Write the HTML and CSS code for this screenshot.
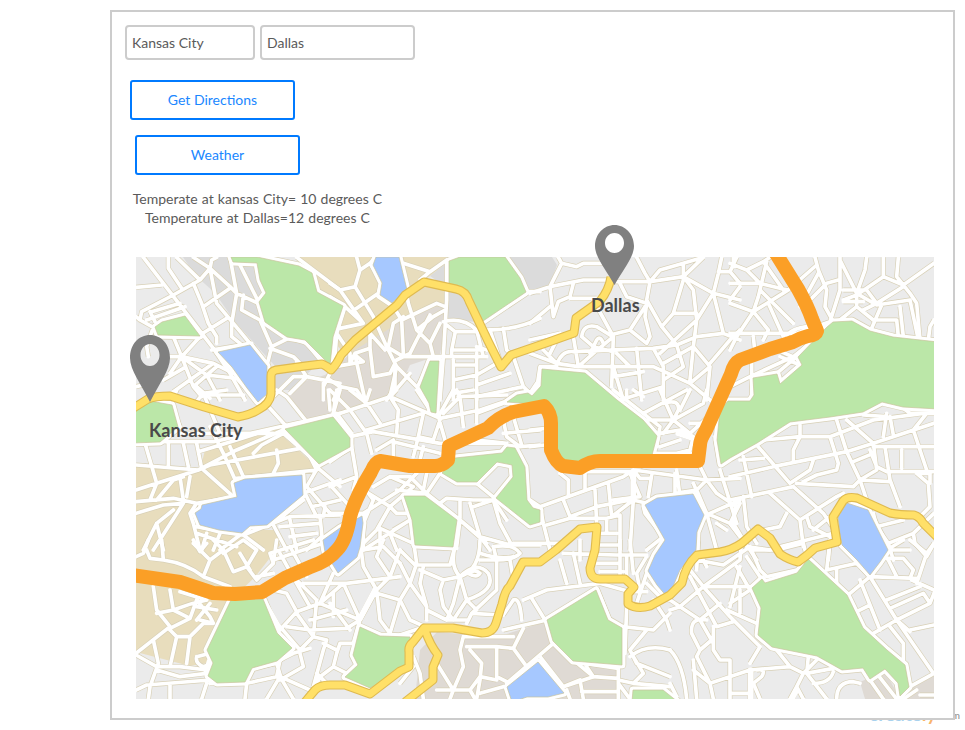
FILE: index.html
```html
<!DOCTYPE html>
<html lang="en">
<head>
<meta charset="utf-8">
<title>Directions and weather</title>
<link rel="stylesheet" href="styles.css">
</head>
<body>
<div class="brand"><span class="brand-blue">create</span><span class="brand-orange">ly</span></div>
<div class="brand-com">.com</div>
<main class="frame">
  <div class="fields">
    <div class="field field-from">Kansas City</div>
    <div class="field field-to">Dallas</div>
  </div>
  <button class="btn btn-directions">Get Directions</button>
  <button class="btn btn-weather">Weather</button>
  <p class="report">Temperate at kansas City= 10 degrees C<br>Temperature at Dallas=12 degrees C</p>
  <section class="map">
    <svg class="map-art" viewBox="136 257 798 442" width="798" height="442">
      <defs>
        <g id="greens">
          <path d="M231 257H257L299 266 312 273 317 292 343 306 333 337 330 365 322 357 305 340 287 337 265 322 259 302 266 293 260 280 257 263 233 262Z"/>
          <path d="M155 327L162 322 185 316 200 336 158 335Z"/>
          <path d="M449 261L460 257H505L520 278 526 292 483 321 467 292 449 287Z"/>
          <path d="M430 361H439L436 413 431 412 429 403 420 387Z"/>
          <path d="M542 369L585 373 617 400 643 420 657 436 652 455 640 465H560L545 405 507 402 517 395 528 393 532 396 541 386Z"/>
          <path d="M753 378L777 374 780 384 802 365 798 357 827 327 833 322 852 321 870 331 893 337 938 342V409L903 407 882 402 863 412 830 417 790 422 757 443 730 458 721 464 717 440 720 410 728 401H750L754 395Z"/>
          <path d="M132 443V407L150 401 172 405 178 427 160 442Z"/>
          <path d="M285 429L333 417 350 438V447L319 464Z"/>
          <path d="M442 473L455 458 502 453 507 447 515 448 525 467 527 500 533 508 540 510V522L530 525 496 498 513 477 512 465 497 462 477 482H457Z"/>
          <path d="M404 496H425L457 520 453 547 415 545 412 520Z"/>
          <path d="M231 600L263 599 277 633 292 648 277 661 252 668 245 682 217 683 208 676 213 663 207 650Z"/>
          <path d="M360 627L380 636 410 637 405 668 370 688 345 677 358 665 353 655Z"/>
          <path d="M547 620L596 590 608 620 622 628V665L573 661 553 641Z"/>
          <path d="M752 588L762 579 765 583 797 573 808 559 847 595 863 628 887 650 905 665 909 687 900 696 898 683 885 669 870 679 863 668 842 670 817 656 772 647 758 635 761 608Z"/>
          <path d="M633 690H663L678 702H632Z"/>
        </g>
        <g id="waters">
          <path d="M218 352L250 345 262 360 267 366V394L258 402 247 388 232 367Z"/>
          <path d="M376 257H399L407 290 392 303 380 295 382 283 373 265Z"/>
          <path d="M202 505L237 497 234 483 245 479 302 475 303 495 267 525 250 526 242 533 219 530 200 525 195 513 201 509Z"/>
          <path d="M323 540L340 528 362 516 363 523 360 547 357 557 338 573 325 552Z"/>
          <path d="M645 505L657 498 693 494 704 515 697 532 696 550 680 570 668 598 657 585 648 571 655 555 665 540Z"/>
          <path d="M838 517L847 503 868 510 877 528 888 550 880 562 870 575 857 560 842 545 840 535Z"/>
          <path d="M507 687L538 662 564 693 548 697H527L512 702Z"/>
        </g>
        <g id="streets">
          <g transform="translate(130 240) scale(.33333)">
            <path d="M40 52L100 130 250 325 300 400 345 480M18 142L95 135M115 52V85L155 145M140 52L205 115M190 52L240 85 300 140 320 160 385 190M130 165L210 120 240 85 245 60 260 52M240 85L260 190 310 250 360 310 415 380M300 52L320 160 305 250V290L330 310M65 215L150 190M50 240L165 200M30 240L35 215 130 165M18 230L30 240 70 262 60 290 50 320 55 350M190 130L215 190 235 250 260 290V310M220 200L300 145M210 285L290 235M245 330L365 310M60 215L75 245M330 75L385 185M340 165L335 210 390 240 425 320 410 380M425 320L475 295M420 325L490 350 510 370M470 290L530 310 575 365M500 52L550 90 630 150M550 100L560 155 630 190"/>
            <path d="M85 290H210M130 290L155 350 190 440 215 470M100 350H155L250 370 330 410M120 400L155 350 210 290M155 350L230 405 320 415 370 470M130 455L250 370M190 440L260 380M18 440L40 435M100 420L160 385M200 440L240 475M230 405L270 480M430 470L490 410 530 410 480 460M500 365L530 410 630 430M580 430V480M610 380L580 440"/>
          </g>
          <g transform="translate(330 240) scale(.33333)">
            <path d="M80 52L90 90 75 140 30 150 0 130M90 90L120 70 135 52M120 70L155 125 145 160 65 215M75 140L130 230 170 320 200 380 270 450M30 150L100 250M0 170L45 200 100 250 30 265M45 200L20 280 15 350M210 52L235 190 260 270 300 310 310 350M220 70L300 95 350 60V180L340 350 330 480M300 95L270 120M350 62L400 52M530 52L590 155H630M460 245L590 160M145 170L190 200 215 240 220 340M215 240L320 190 345 200M175 320L190 250 220 230M20 280L60 340V370L75 340 120 325V280L165 330M15 380L100 365 75 345 105 480M120 325L130 410 180 400 195 370M170 320L220 350H470M195 370V440L170 480M200 360L240 340 260 300 300 225M260 270L310 230 345 210M300 310L330 250M340 245Q400 230 440 270Q550 275 630 235M350 255L375 275H440M375 280L365 330H450M365 330V350M370 360V480M370 375H440M370 420L440 405 500 370M370 460L430 450M440 340V480M440 320L470 330M440 270L460 350M480 270L510 360M520 265L530 330 550 350 580 440M440 435L540 400M440 470L580 440 600 460 620 430"/>
            <path d="M200 380L180 470 240 400M0 420L30 440 80 450 100 480M30 440L10 480M265 435L310 350"/>
          </g>
          <g transform="translate(530 220) scale(.33333)">
            <path d="M85 112L95 130 140 140 160 130H220M95 130L60 200 0 220M60 200L160 180H235M130 190L120 230 85 245 70 290 60 200M60 260L0 310M120 235H200M235 185H360L460 170 550 220 630 240M360 185L350 240 395 320 440 375M360 185L390 150 460 130 520 112M460 130V170M320 112L345 160 360 185M460 170L520 112M460 170L490 210 500 300 490 380 480 480M575 112L565 160 550 220 500 300 390 400M550 220L580 340M565 155H600L620 112M600 155L630 190M460 180L430 280 395 320M430 280H500M270 190L290 230 350 250 345 290 360 350 350 370 300 330 240 345M300 330L345 260M190 240L250 350 245 500M240 345L200 320Q160 310 155 350L190 380 250 395M130 350L145 440M90 340L60 400M0 360L90 340M0 400L80 430 145 440H370L480 490 540 540M130 395L370 385M80 435Q95 390 130 395M180 400L200 360Q210 345 220 370M145 440L190 400 250 350M250 440L280 540M320 385L335 540M370 385L400 440V540M370 385L440 375 500 350 580 340 630 360M250 470L340 455M400 430L490 380 540 440 530 540M540 430L600 360 630 330M440 375L460 440 400 480M480 490L540 440M270 540L400 500M18 520L30 440H80M300 440L260 400M40 390L80 430"/>
          </g>
          <g transform="translate(730 240) scale(.33333)">
            <path d="M0 130L90 130 150 145 175 150M0 70L50 90 90 130M50 90L100 65 120 52M0 180L30 140M100 65L160 150M110 65L85 170 70 215 175 150 260 75M10 52V80M0 190L70 215 115 270 100 300M0 280H200L300 245M20 290L70 215M90 150L190 250M115 190L160 290M0 330L20 290M70 290L75 340M255 52L265 90 290 150 285 200 310 245M210 200L265 100M230 190L290 130 325 120M330 52V150L300 245M330 60L380 160 440 195 540 180 565 300M340 180L380 165 460 110 520 135 612 70M460 52V110M455 195L425 265M410 52L405 90 380 160M505 52L500 110 540 160 560 190 570 300M340 150H410L440 190 520 140M380 165V200L330 240M380 200L430 240H500L505 290M510 200L520 290M612 240L600 260 595 300M400 210L440 190M340 185H400M0 440L60 410 190 350 240 310M65 370V470M150 350L210 375M140 400L200 350M120 320L210 360M170 285Q190 265 230 260"/>
          </g>
          <g transform="translate(130 390) scale(.33333)">
            <path d="M95 40L130 60 150 110M130 30L140 0M195 40L220 10 290 0M220 10L270 130M240 15H340M18 155H250L450 110 630 70M150 130H430M45 160L80 280 60 330M115 160V225M160 160L175 230M200 160L215 235 310 320M18 225L205 240 320 180 460 120M205 240L240 225 540 170M18 300L80 280 205 240M18 335L130 325 200 340 320 320M80 330L130 270 160 260M150 260L160 330M180 260L170 320M205 185L320 150 430 115M240 110L280 190 320 280M300 170L340 260M370 190L395 165 460 130 540 200 560 240 320 265M440 180L445 220 430 250M370 0L470 110 565 230 530 290 600 370M440 0L470 20 530 95M560 230L630 190M565 235L630 290M510 260L520 300 545 350 630 330M520 310L630 270M545 350L560 380 580 380 585 350M430 400L520 330M18 370L100 345 160 340 70 480M200 340L180 370 190 400 210 480M200 410L340 435 480 380 630 375M40 480L80 400 130 360M80 400L100 480M230 430L215 480M270 430L250 480M200 430L320 470M340 435L400 480M330 435L270 480M430 405L470 480M480 390L500 480M450 410L570 400M570 380L580 480M480 440L560 430M530 480L575 440M595 0L600 60M630 0L610 70"/>
          </g>
          <g transform="translate(330 390) scale(.33333)">
            <path d="M0 80L180 20 330 85 450 60 630 0M0 0L60 60 110 130 125 190M20 0L10 70M60 0L110 40 150 100M110 30L120 0M200 0L180 20 205 60 200 130M60 140L130 125 330 160 520 160M65 130L20 70M110 120L280 70 265 140 310 150 330 90M260 0L300 60M345 150L325 80 370 0M390 20L400 110M385 20L530 15M440 0V100M440 70L520 40M340 70L390 20 380 0M140 180L190 150V200M190 155L330 190M250 200L265 140M270 210L280 170M520 90L530 140 570 170 630 165M550 80L575 165M520 130L630 120M440 150L530 160M0 290L80 260M0 285L60 350M0 215L65 170 60 140M65 170L80 260 70 300M0 370H110M100 300L180 350 140 420 100 460M180 350L200 370 240 370M180 350L250 290 180 260 130 290M100 370L210 300 260 250M180 260H240L290 310 330 250M200 300L290 310 390 390 380 470M390 390L450 440 540 465H630M290 250L280 300M240 330L250 460M100 480L240 390M150 420V480M150 415L250 460M190 420L240 390M200 480L180 430M330 340L350 325 430 330 490 330 530 390M390 330V385M420 340L450 440 480 480M430 350L490 330M390 390L470 460M490 330L510 400 545 465M250 465L380 475M495 325L440 280M100 290L130 330 100 400V480"/>
          </g>
          <g transform="translate(530 390) scale(.33333)">
            <path d="M0 120L50 115M0 170L45 165M90 250L115 270V320M165 250V300M30 350L280 260 310 240 530 270 630 265M170 245H310M0 330L30 350 40 400 60 480M50 405L120 385 230 385 270 375V480M120 380L200 350 300 330M100 330L120 380M195 300L200 400M235 280L245 380M300 250L330 320 250 330M245 380L310 330 300 480M310 330L350 340M365 255L355 320M340 350L345 370 400 440 350 480M310 240L330 265 360 265M435 250V310L500 300 530 370M490 280L530 370 600 400 630 340M530 270L560 310 620 350M570 240L620 400M510 230L530 270 500 300M530 370L560 480M540 370L630 330M600 400L630 440M555 140L570 225M250 0L390 110 380 170M290 0V30M390 0L430 90 400 130M340 70L470 0M400 40Q450 25 445 60L430 90 480 130 590 30M480 0L450 60M350 90H430M430 90L520 40 530 0M390 130L450 120 490 140 480 180 440 190M390 170L450 150M370 190H490M540 100H480M600 30H630M210 430H260M210 465H265M230 385V430M440 240L450 320M310 0L340 20M560 400L590 420"/>
            <path class="junction" d="M445 130L490 145M310 250V325"/>
          </g>
          <g transform="translate(730 400) scale(.33333)">
            <path d="M0 230L130 200 350 155 430 130 612 70M40 170L65 290M30 180L100 175M80 135L180 250 240 210 250 180M100 120L210 110H300L430 60 580 40M210 75V110L190 150V185M320 60L350 155 390 240 410 300M300 110L325 190 320 210 260 225 220 245M350 60L430 130 440 210 390 240 370 260 200 250M0 300L190 260M120 280L210 360 320 290 340 280M190 260L280 340 320 400M40 290L50 380 80 430M20 300L10 370 40 420M430 140H612M420 150L440 200 470 215H612M465 140L480 240 510 320M515 150V205M550 90L590 210M470 40L460 110M480 50L490 105M550 90L590 40M400 45L470 50M370 185L430 160M390 240L480 245M560 220L595 250 600 320 570 350M560 220H600V250M100 390L150 380 170 340M210 360L220 440M150 440L310 400M50 440L120 450M230 350L240 380 300 410M250 390L300 350M430 340L440 380 480 370 520 360M440 380L475 430 550 400 612 340M475 430L490 480M550 400L555 430 590 470 612 430M0 370L40 420 80 480M300 420L295 480M335 430L380 480M520 25L540 40H612"/>
          </g>
          <g transform="translate(130 540) scale(.33333)">
            <path d="M50 30L60 55 100 60Q170 70 220 110L300 140M100 60L95 0M18 50L40 40 55 0M190 0L210 35 230 10M190 10L240 60 280 30 250 0M240 60L220 110M280 30L310 95 350 80 380 30 340 0 280 40M350 80L380 120 430 70 420 40 550 0M330 40L360 90M430 70L440 0M450 40L500 130 540 200M480 20L530 110M430 60L490 40 580 10M380 110L430 100M70 140L80 210 120 260 18 340M120 150L130 210 80 220M150 155L230 180M130 210Q180 190 230 180M130 210L180 235 120 265M180 235L200 180 240 230 250 250H220L180 290 170 370M240 190L200 240M120 270L140 290 120 380M140 290H180M200 200L260 210M210 240L250 250M70 300L85 370 60 440 55 477M18 345L80 380 150 380 230 390M200 350L240 340 250 370 220 380Q195 370 200 350M230 390L240 420 50 435 18 450M120 430V477M80 390L150 410 230 400M230 430L215 477M240 430H350L440 410 450 360 490 340M350 430L345 477M345 430L370 385 440 370 455 420M450 410L490 477M450 410L410 477M450 410L540 450M490 340L540 325M510 330L450 260M430 150L470 160 500 215 450 270M500 215L570 190 610 100M500 220L550 290 510 330M470 260L540 270 650 265 690 240M560 180L550 290 590 300 580 330M570 190L690 240 670 310M520 130H650L810 110M500 120L560 180M640 130L690 240 740 150 700 80 690 0M640 130L570 190M610 160V230M540 240L650 210M600 190L660 270M670 310L630 310 620 340 610 380 650 400M580 330L550 440M580 310L620 330M610 380L570 410 540 477M560 400L600 440M740 150L750 240 780 280M740 160L810 180 780 280M740 150L780 110 810 30M760 0L740 50 780 110M700 30L760 20 810 70M510 340L520 380 450 420"/>
            <path class="junction" d="M405 190L445 260M735 150L690 235M238 365L230 395"/>
          </g>
          <g transform="translate(400 540) scale(.33333)">
            <path d="M40 0L50 70 30 130 80 200V240M0 30L45 75H150L170 0M0 70L30 130 0 180 30 240 75 260M70 80L60 130 80 200M60 90L130 120 120 150 130 200 160 240 200 180M130 120L180 110 200 180 230 210M180 110L160 190 140 240M165 20Q150 80 180 110Q240 90 240 0M180 110Q230 60 265 100Q290 150 200 180M205 100Q225 85 240 100Q230 115 205 100M240 60H290L280 20M290 60V150L215 220 200 250M80 210L140 240H200M240 40Q300 60 340 50M280 20Q340 10 360 40Q340 60 290 60M330 60L340 120M340 10H480M215 220L300 225M310 225L340 180Q360 170 365 240M370 180L440 150 600 130 690 155H740M310 270L440 240 590 145M395 175L435 240M460 310L580 410 655 415M590 145L630 240 670 265V350M460 310L320 430M480 60L500 130M520 40L540 130M490 40L650 45H740M540 0V60M590 70H660M600 95H670M660 0V110M690 0L700 100M740 50L710 100 720 150M680 50V110M740 130L780 170M740 100L710 190M680 200L675 340M670 260L760 270 810 220M760 180L800 240 810 270M690 350Q740 310 810 330M740 270L690 330 710 370 810 410M655 350V477M700 350L730 400 700 430 655 420M700 430L810 440M655 430L690 477M0 285L60 265"/>
            <path d="M190 290L180 330 190 380 160 450 110 370M190 290H340M200 320H290L340 325 370 265M290 325V410L330 430M210 330L245 370 240 420 230 477M240 410L290 420M340 325L380 380M110 450H210L240 410M160 450L150 477M210 450L225 477M240 460L310 440M40 350L60 400 70 477M420 350L490 440 580 410M490 440L540 420 550 477M545 455H655M520 365L655 385M550 365L580 410M0 430L40 380M500 450L510 477"/>
          </g>
          <g transform="translate(670 540) scale(.33333)">
            <path d="M85 0L80 90M60 90L100 140 180 230 270 320M100 140L210 60 215 0M100 140H240M0 210L30 200 100 140M0 180L30 200 90 240 130 310M60 110L140 260 190 245M90 240L150 190M110 240Q60 230 65 280L90 330 80 350 120 430 130 477M130 260V330L150 360H180V477M120 430L240 390V477M90 330L125 300M80 60L160 75 240 20M180 200L210 80M210 150V220M170 210L260 250M200 80L240 150M230 50L270 110M240 20L270 90 290 110 380 90M250 30H320L400 10 410 50M180 190L240 150M320 330L360 380 240 390M270 320L240 370M360 380L400 400 380 440 400 477M415 350L410 400 470 477M400 400L440 360M410 400L490 385M430 430Q480 430 490 395M260 390Q290 385 275 410L250 430 270 477M180 460H240M360 477L380 440M500 477Q500 425 550 425L570 430M600 420L640 477M620 400L680 477M470 90L480 0M470 90L560 70M500 85V130M560 70L600 110 680 240 790 400M540 160L600 110 650 30H720M560 215L600 195M570 120L630 270M610 280L680 240 780 190 792 160M600 110L740 115M725 120L792 150M650 55H700L730 90 720 115M650 180L750 140M660 205L760 160 780 190M655 60L680 110M720 0L770 40 740 130M770 40L792 10M650 30L700 0M720 270L792 255M660 260L700 310V360M720 440L792 400M700 477L740 450M750 465H792M0 330Q40 370 50 477M70 360L80 477M70 390L120 430M0 430L20 470M90 40L110 80M680 240L720 275"/>
            <path class="junction" d="M242 390V477M380 450L365 477"/>
          </g>
        </g>
        <g id="avenues">
          <path d="M132 409L148 399Q155 396 170 396L204 407 238 417Q250 415 258 410Q270 404 271 394V376Q271 371 276 370L305 366 322 364Q327 366 331 370Q337 364 341 355L355 340 397 305 405 295 424 282 456 289Q466 291 469 301L488 341 501 367 511 355 546 343 574 333 576 318 600 301Q609 290 611 277"/>
          <path d="M425 630Q430 645 438 655L433 667V680L405 702M305 702L315 690Q320 685 330 685H345L370 694 400 671 409 667V652Q408 646 413 642L424 628H453L482 633Q493 633 496 623L502 604Q505 590 510 586L523 562 540 562 556 550 580 529 597 527 595 550 590 568Q590 579 600 579H625L634 587 628 594V604Q637 610 650 606L670 595 682 583Q685 566 697 555L720 552Q732 550 742 543L758 529 770 538 780 554Q789 560 798 562Q808 555 815 548L837 542 833 517 843 501Q847 496 857 498L890 513Q900 515 914 515Q920 517 923 523L938 538"/>
        </g>
      </defs>
      <rect class="land" x="136" y="257" width="798" height="442"/>
      <g class="urban">
        <path d="M183 257H231L260 262 266 295 268 322 305 340 322 360 290 390H272L275 366 235 322 215 293 195 275Z"/>
        <path d="M449 292L467 294 477 322 446 319ZM430 276L446 263V287Z"/>
        <path d="M507 257H552L557 265 550 285 528 292Z"/>
      </g>
      <g class="sand">
        <path d="M296 257H446V263L425 280 444 290V305L400 320 366 350 345 355 333 340 343 306 317 292 312 273Z"/>
        <path d="M136 466L200 470 205 450 275 429 318 468 300 475 235 500 250 530 275 530 280 545 255 577 231 600 207 650 213 662 190 666 136 652Z"/>
      </g>
      <g class="town">
        <path d="M287 400L293 387 305 381 325 375 355 350 400 322 444 303 446 320 440 355 410 365 395 397 345 412 306 420 297 410Z"/>
        <path d="M437 632L497 637 545 622 556 646 590 662 618 669V699H415L420 650Z"/>
        <path d="M860 682L885 671 900 699H865ZM909 688L934 674V699H902Z"/>
      </g>
      <g class="curb"><use href="#greens" class="rim"/><use href="#waters" class="rim"/><use href="#streets"/></g>
      <g class="asphalt"><use href="#greens" class="rim"/><use href="#waters" class="rim"/><use href="#streets"/></g>
      <use href="#greens" class="green"/>
      <use href="#waters" class="water"/>
      <use href="#avenues" class="avenue-edge"/>
      <use href="#avenues" class="avenue"/>
      <path class="route" d="M775 252L798 289Q808 307 812 319L817 331Q816 335 808 336Q800 338 793 342L770 349 740 360Q734 363 731 374L706 430Q700 440 700 445L698 461H600Q590 461 580 468L563 466Q556 463 551 450V423Q551 413 544 406L513 412Q498 417 488 428L449 446 448 460Q442 466 435 466H410L380 461Q375 462 371 472Q355 498 350 517Q346 541 337 550Q328 561 310 567L285 578 262 592 235 594 213 593 180 582 132 575"/>
    </svg>
    <svg class="pin pin-kansas" viewBox="0 0 40 67" width="40" height="67"><path fill-rule="evenodd" d="M20 0C31 0 40 9 40 23C40 35 29 49 20 67C11 49 0 35 0 23C0 9 9 0 20 0ZM20 9C14.500 9 10.500 14 10.500 20S14.500 31 20 31S29.500 26 29.500 20S25.500 9 20 9Z"/></svg>
    <svg class="pin pin-dallas" viewBox="0 0 39 60" width="39" height="60"><path fill-rule="evenodd" d="M19.500 0C30 0 39 9 39 21C39 32 28 45 19.500 60C11 45 0 32 0 21C0 9 9 0 19.500 0ZM19.500 8C14 8 10 12.500 10 18S14 28 19.500 28S29 23.500 29 18S25 8 19.500 8Z"/></svg>
    <span class="place place-kansas">Kansas City</span>
    <span class="place place-dallas">Dallas</span>
  </section>
</main>
</body>
</html>
```
FILE: styles.css
```css
* { box-sizing: border-box; }
body {
  margin: 0;
  padding-top: 10px;
  height: 730px;
  overflow: hidden;
  position: relative;
  background: #fff;
  color: #5a5a5a;
  font: 14px/19px Lato, sans-serif;
}
.frame {
  position: relative;
  width: 845px;
  height: 710px;
  margin-left: 110px;
  padding: 13px 0 0 13px;
  border: 2px solid #ccc;
  background: #fff;
}
.fields { display: flex; gap: 5px; }
.field {
  height: 35px;
  padding: 0 5px;
  border: 2px solid #ccc;
  border-radius: 4px;
  line-height: 32px;
}
.field-from { width: 130px; }
.field-to { width: 155px; }
.btn {
  display: block;
  width: 165px;
  height: 40px;
  padding: 0 0 1px;
  border: 2px solid #007aff;
  border-radius: 3px;
  background: #fff;
  color: #1a87ff;
  font: inherit;
}
.btn-directions { margin: 20px 0 0 5px; }
.btn-weather { margin: 15px 0 0 10px; }
.report {
  width: 265px;
  margin: 14px 0 0;
  text-align: center;
  word-spacing: .55px;
}
.map {
  position: relative;
  width: 798px;
  height: 442px;
  margin: 30px 0 0 11px;
}
.map-art { display: block; overflow: hidden; }
.land { fill: #ebebeb; }
.urban { fill: #dbdbdb; }
.sand { fill: #e8ddbd; }
.town { fill: #dfdad4; }
.curb, .asphalt { fill: none; stroke-linejoin: round; }
.curb { stroke: #d8d0b6; stroke-width: 15px; }
.asphalt { stroke: #fff; stroke-width: 11px; }
.asphalt { stroke-linecap: round; }
.curb .rim { stroke-width: 8.4px; }
.asphalt .rim { stroke-width: 7px; }
.junction { stroke-width: 17px; }
.curb .junction { stroke-width: 20px; }
.green, .water { stroke: #c9c39b; stroke-width: .7px; stroke-linejoin: round; }
.green { fill: #bbe7a8; }
.water { fill: #a6c8ff; }
.avenue-edge, .avenue, .route { fill: none; stroke-linejoin: round; }
.avenue-edge { stroke: #dfba50; stroke-width: 9px; }
.avenue { stroke: #ffe068; stroke-width: 6.8px; }
.route { stroke: #fb9f26; stroke-width: 14px; }
.pin { position: absolute; fill: #808080; }
.pin-kansas { left: -6px; top: 78px; }
.pin-dallas { left: 458.500px; top: -32px; }
.place {
  position: absolute;
  color: #4a4a4a;
  font-size: 18px;
  font-weight: 700;
  line-height: 22px;
  white-space: nowrap;
}
.place-kansas { left: 13px; top: 162px; }
.place-dallas { left: 455px; top: 37px; }
.brand {
  position: absolute;
  left: 869px;
  top: 702px;
  font-size: 19px;
  font-weight: 700;
  line-height: 24px;
}
.brand-blue { color: #a9d2ee; }
.brand-orange { color: #f9b56c; }
.brand-com {
  position: absolute;
  right: 5px;
  top: 709px;
  font-size: 10px;
  line-height: 13px;
  color: #888;
}
```
